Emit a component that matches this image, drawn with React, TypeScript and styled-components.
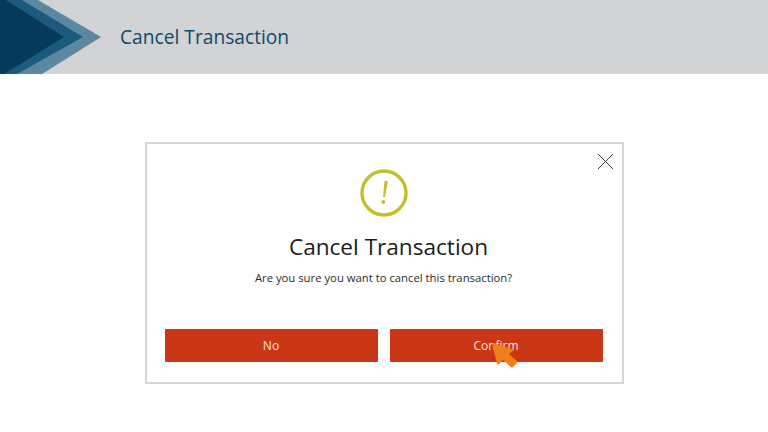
import { createGlobalStyle } from 'styled-components';
import styled from 'styled-components';

const GlobalStyle = createGlobalStyle`
	html, body {
		margin: 0;
		padding: 0;
		background: #ffffff;
		font-family: 'Open Sans', sans-serif;
	}
`;

const Page = styled.div`
	width: 768px;
	height: 432px;
	overflow: hidden;
	display: flex;
	flex-direction: column;
	align-items: center;
`;

const Header = styled.header`
	align-self: stretch;
	height: 74px;
	background: #d1d3d4;
	display: flex;
	align-items: center;
	gap: 19px;
`;

const HeaderLogo = styled.svg`
	width: 101px;
	height: 74px;
	flex: none;
`;

const HeaderTitle = styled.h1`
	margin: 0 0 1px;
	font-size: 19.2px;
	font-weight: 400;
	color: #0e4a68;
`;

const Modal = styled.section`
	position: relative;
	box-sizing: border-box;
	width: 479px;
	height: 242px;
	margin-top: 68px;
	border: 2px solid #d6d6d6;
	background: #ffffff;
	display: flex;
	flex-direction: column;
	align-items: center;
	padding: 25px 19px 20px 18px;
`;

const CloseIcon = styled.svg`
	position: absolute;
	top: 9px;
	right: 8px;
	width: 17px;
	height: 17px;
`;

const ModalTitle = styled.h2`
	margin: 14px 0 0 10px;
	font-size: 22.6px;
	line-height: 32px;
	font-weight: 400;
	color: #1c1c1c;
`;

const ModalText = styled.p`
	margin: 6px 0 0;
	font-size: 11.3px;
	line-height: 18px;
	color: #2b2b2b;
`;

const Buttons = styled.div`
	align-self: stretch;
	margin-top: auto;
	display: grid;
	grid-template-columns: 1fr 1fr;
	gap: 12px;
`;

const Button = styled.button`
	height: 33px;
	border: none;
	border-radius: 1px;
	background: #cb3615;
	color: #f7e6df;
	font-family: inherit;
	font-size: 12px;
	padding: 0;
`;

const Cursor = styled.svg`
	position: absolute;
	left: 344px;
	top: 198px;
	width: 27px;
	height: 26px;
`;

const App = () => {
	return (
		<Page>
			<GlobalStyle />
			<Header>
				<HeaderLogo viewBox='0 0 101 74'>
					<polygon points='0,0 38,0 101,37 42,74 0,74' fill='#5b87a0' />
					<polygon points='0,0 22,0 83,37 17,74 0,74' fill='#1b5a7c' />
					<polygon points='0,0 6,0 64,37 4,74 0,74' fill='#053a5a' />
				</HeaderLogo>
				<HeaderTitle>Cancel Transaction</HeaderTitle>
			</Header>
			<Modal>
				<CloseIcon viewBox='0 0 17 17'>
					<path d='M1 1 L16 16 M16 1 L1 16' stroke='#3c3c3c' strokeWidth='1' fill='none' />
				</CloseIcon>
				<svg width='48' height='48' viewBox='0 0 48 48'>
					<circle cx='24' cy='24' r='22' fill='none' stroke='#c4bf2c' strokeWidth='3.4' />
					<path d='M28 12 L25 28 L23 28 L24.5 12 Z' fill='#c4bf2c' />
					<circle cx='23.3' cy='33' r='2' fill='#c4bf2c' />
				</svg>
				<ModalTitle>Cancel Transaction</ModalTitle>
				<ModalText>Are you sure you want to cancel this transaction?</ModalText>
				<Buttons>
					<Button>No</Button>
					<Button>Confirm</Button>
				</Buttons>
				<Cursor viewBox='0 0 27 26'>
					<path d='M2 2 L7 22 L12 17 L21 25 L26 20 L17 12 L22 8 Z' fill='#ee7f1a' stroke='#ee7f1a' strokeWidth='1.5' strokeLinejoin='round' />
				</Cursor>
			</Modal>
		</Page>
	);
};

export default App;
